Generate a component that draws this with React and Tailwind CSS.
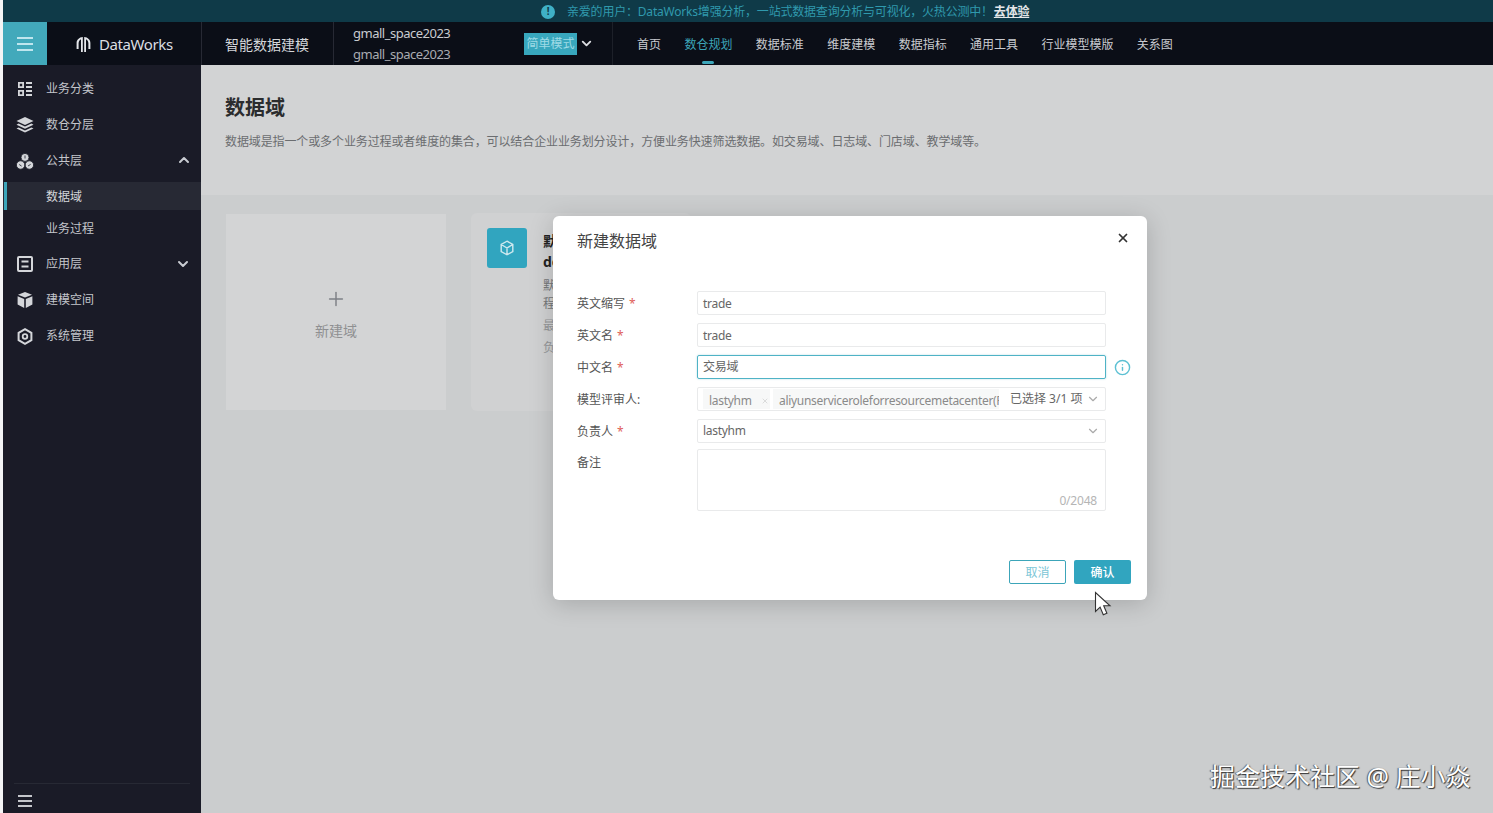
import React from 'react'
import { ChevronDown, ChevronUp, Info, Plus, X } from 'lucide-react'

const font = { fontFamily: '"Noto Sans", "Noto Sans CJK SC", sans-serif' }

const GridIcon = () => (
    <svg width="16" height="16" viewBox="0 0 16 16" fill="#d4d6da">
        <path fillRule="evenodd" d="M1 1h6v6H1zM2.8 2.8v2.4h2.4V2.8zM1 9h6v6H1zM2.8 10.8v2.4h2.4v-2.4z" />
        <path d="M9 1h6v1.9H9zM9 5.1h6V7H9zM9 9h6v1.9H9zM9 13.1h6V15H9z" />
    </svg>
)

const LayersIcon = () => (
    <svg width="18" height="16" viewBox="0 0 18 16" fill="#d4d6da">
        <path d="M9 0l8.5 4L9 8 .5 4z" />
        <path d="M2.6 6.6L9 9.6l6.4-3 2.1 1.2L9 11.8.5 7.8z" />
        <path d="M2.6 10.4L9 13.4l6.4-3 2.1 1.2L9 15.6.5 11.6z" />
    </svg>
)

const CubesIcon = () => (
    <svg width="18" height="17" viewBox="0 0 18 17" fill="#d4d6da" stroke="#181a26" strokeWidth="0.8">
        <circle cx="9" cy="4.4" r="4" />
        <circle cx="4.6" cy="12" r="4.2" />
        <circle cx="13.4" cy="12" r="4.2" />
        <path d="M9 2.5v3M3.2 11.5l2.4 1.6M12 13l2.6-1.6" fill="none" />
    </svg>
)

const ListBoxIcon = () => (
    <svg width="16" height="16" viewBox="0 0 16 16" fill="none" stroke="#d4d6da" strokeWidth="2">
        <rect x="1" y="1" width="14" height="14" rx="1" />
        <path d="M4.5 5.5h7M4.5 10.5h7" />
    </svg>
)

const BoxIcon = () => (
    <svg width="16" height="16" viewBox="0 0 16 16" fill="#d4d6da">
        <path d="M8 0l7 2.8L8 5.6 1 2.8z" />
        <path d="M.6 4.2l6.6 2.7V16L.6 12.6z" />
        <path d="M15.4 4.2L8.8 6.9V16l6.6-3.4z" />
    </svg>
)

const HexIcon = () => (
    <svg width="16" height="17" viewBox="0 0 16 17" fill="none" stroke="#d4d6da">
        <path d="M8 1.2l6.4 3.6v7.4L8 15.8l-6.4-3.6V4.8z" strokeWidth="2" />
        <circle cx="8" cy="8.5" r="2.3" strokeWidth="1.8" />
    </svg>
)

const Bars = ({ color, wide, gap, thick }) => (
    <svg width={wide} height={gap * 2 + thick} viewBox={`0 0 ${wide} ${gap * 2 + thick}`} fill={color}>
        <rect y="0" width={wide} height={thick} />
        <rect y={gap} width={wide} height={thick} />
        <rect y={gap * 2} width={wide} height={thick} />
    </svg>
)

const menu = [
    { label: '业务分类', icon: <GridIcon />, rowClass: 'h-9' },
    { label: '数仓分层', icon: <LayersIcon />, rowClass: 'h-9' },
    { label: '公共层', icon: <CubesIcon />, rowClass: 'h-9', arrow: 'up' },
    { label: '数据域', rowClass: 'h-7 mt-1', active: true },
    { label: '业务过程', rowClass: 'h-7 mt-1' },
    { label: '应用层', icon: <ListBoxIcon />, rowClass: 'h-9 mt-[3px]', arrow: 'down' },
    { label: '建模空间', icon: <BoxIcon />, rowClass: 'h-9' },
    { label: '系统管理', icon: <HexIcon />, rowClass: 'h-9' },
]

const navItems = ['首页', '数仓规划', '数据标准', '维度建模', '数据指标', '通用工具', '行业模型模版', '关系图']

const Sidebar = () => (
    <aside className="w-[198px] shrink-0 bg-[#1a1b27] flex flex-col justify-between">
        <div className="pt-[5px]">
            {menu.map((item) => (
                <div
                    key={item.label}
                    className={`relative flex items-center pt-[2px] text-xs ${item.rowClass} ${item.active ? 'bg-[#272934] text-[#d4d6da]' : 'text-[#c4c6cb]'}`}
                >
                    {item.active && <span className="absolute left-px top-0 bottom-0 w-[3px] bg-[#3ca5b9]" />}
                    <span className="w-[43px] flex justify-center pl-[1px] shrink-0">{item.icon}</span>
                    <span>{item.label}</span>
                    {item.arrow === 'up' && <ChevronUp size={16} strokeWidth={3} className="ml-auto mr-[9px] -mt-[2px] text-[#c9ccd2]" />}
                    {item.arrow === 'down' && <ChevronDown size={16} strokeWidth={3} className="ml-auto mr-[10px] text-[#c9ccd2]" />}
                </div>
            ))}
        </div>
        <div className="h-[30px] mx-[11px] border-t border-[#272934] flex items-center pl-1 pt-1">
            <Bars color="#c4c6cb" wide={14} gap={5} thick={2} />
        </div>
    </aside>
)

const Header = () => (
    <header className="h-[43px] bg-[#0b0e17] flex items-stretch shrink-0">
        <div className="w-[44px] bg-[#42a9bb] flex items-center justify-center">
            <Bars color="#bfe6ee" wide={16} gap={6} thick={2} />
        </div>
        <div className="w-[154px] flex items-center pl-[29px] pt-[2px] gap-2 text-[15px] tracking-[-0.4px] text-[#dcdee2] shrink-0">
            <svg width="15" height="17" viewBox="0 0 15 17" fill="#e4e6ea">
                <path d="M6.8 1v15H5V3.3C3.6 4 2.6 5.4 2.6 7.2V13H.6V7C.6 3.8 3.2 1.3 6.8 1z" />
                <path d="M8.2 1c3.6.3 6.2 2.8 6.2 6v6h-2V7.2c0-1.8-1-3.2-2.4-3.9V16H8.2z" />
            </svg>
            <span>DataWorks</span>
        </div>
        <div className="w-[132px] border-l border-[#272934] flex items-center pl-[23px] pt-[2px] text-sm text-[#d4d6da] shrink-0">智能数据建模</div>
        <div className="w-[191px] border-l border-[#272934] pl-[19px] flex flex-col justify-center gap-[3px] text-[13px] leading-[18px] tracking-[-0.5px] text-[#c9cbd0] shrink-0">
            <span>gmall_space2023</span>
            <span className="text-[#a9abb1]">gmall_space2023</span>
        </div>
        <div className="flex items-center w-[88px] shrink-0">
            <span className="w-[53px] h-[22px] bg-[#38a7bd] text-[#9fdbe6] text-xs flex items-center justify-center">简单模式</span>
            <ChevronDown size={15} strokeWidth={3} className="ml-[2px] text-[#dcdee2]" />
        </div>
        <nav className="border-l border-[#1d2029] pl-6 pt-[2px] flex items-center gap-[23.4px] text-xs text-[#c9cbd0]">
            {navItems.map((name) => (
                <span key={name} className={`relative ${name === '数仓规划' ? 'text-[#3ca5b9]' : ''}`}>
                    {name}
                    {name === '数仓规划' && <span className="absolute left-[18px] top-[24px] w-3 h-[3px] bg-[#3ca5b9] rounded-sm" />}
                </span>
            ))}
        </nav>
    </header>
)

const Field = ({ label, required, children, after }) => (
    <div className="flex items-center h-6 mb-2">
        <label className="w-[120px] pt-[2px] text-xs text-[#555] shrink-0">
            {label}
            {required && <span className="text-[#e0605a] ml-1">*</span>}
        </label>
        {children}
        {after}
    </div>
)

const inputClass = 'w-[409px] h-6 border border-[#e9eaeb] rounded-[2px] px-[5px] flex items-center text-xs tracking-[-0.3px] text-[#666]'

const Dialog = () => (
    <div className="absolute left-[553px] top-[216px] w-[594px] h-[384px] bg-white rounded-md shadow-[0_4px_24px_rgba(0,0,0,0.18)] flex flex-col pl-6 pr-4 pb-4">
        <div className="flex justify-between items-start pt-[14px] h-[75px]">
            <h3 className="text-base leading-[22px] text-[#444]">新建数据域</h3>
            <X size={14} strokeWidth={3} className="text-[#333] mr-[1px] mt-[1px]" />
        </div>
        <Field label="英文缩写" required><div className={`${inputClass} pt-[2px]`}>trade</div></Field>
        <Field label="英文名" required><div className={`${inputClass} pt-[2px]`}>trade</div></Field>
        <Field
            label="中文名"
            required
            after={<Info size={17} strokeWidth={2} className="ml-2 text-[#5cc0d3]" />}
        >
            <div className={`${inputClass} !border-[#4fb3c6] shadow-[0_0_2px_rgba(60,165,185,0.4)]`}>交易域</div>
        </Field>
        <Field label="模型评审人:">
            <div className={`${inputClass} pr-[5px]`}>
                <span className="w-[67px] h-5 bg-[#f7f8f8] text-[#8a8a8a] flex items-center pl-[6px] pt-[3px] shrink-0">
                    lastyhm<X size={8} className="ml-[9px] text-[#ccc]" />
                </span>
                <span className="w-[226px] ml-[3px] h-5 bg-[#f7f8f8] text-[#8a8a8a] pl-[6px] pt-[3px] leading-[18px] overflow-hidden whitespace-nowrap shrink-0">
                    aliyunserviceroleforresourcemetacenter(R
                </span>
                <span className="ml-[11px] text-[#666] tracking-normal whitespace-nowrap">已选择 3/1 项</span>
                <ChevronDown size={14} className="ml-auto text-[#aaa]" />
            </div>
        </Field>
        <Field label="负责人" required>
            <div className={`${inputClass} pr-[5px] justify-between`}>
                lastyhm
                <ChevronDown size={14} className="text-[#aaa]" />
            </div>
        </Field>
        <div className="flex -mt-[2px]">
            <label className="w-[120px] text-xs text-[#555] pt-[6px] shrink-0">备注</label>
            <div className="relative w-[409px] h-[62px] border border-[#e9eaeb] rounded-[2px]">
                <span className="absolute right-[8px] bottom-[1px] text-xs tracking-[-0.2px] text-[#b5b5b5]">0/2048</span>
            </div>
        </div>
        <div className="mt-auto flex justify-end gap-2">
            <button className="w-[57px] h-6 border border-[#3ca5b9] rounded-[2px] pt-[2px] text-xs text-[#7cc6d6]">取消</button>
            <button className="w-[57px] h-6 bg-[#31a5bf] rounded-[2px] pt-[2px] text-xs font-medium text-white">确认</button>
        </div>
    </div>
)

const Cards = () => (
    <div className="flex gap-[25px] pl-[25px] pt-[19px]">
        <div className="w-[220px] h-[196px] bg-[#d3d4d5] flex flex-col items-center justify-center pt-[4px] text-[#8f9092]">
            <Plus size={22} strokeWidth={1.6} className="text-[#7e8086]" />
            <span className="text-sm mt-[11px]">新建域</span>
        </div>
        <div className="w-[220px] h-[198px] -mt-px bg-[#d0d1d2] rounded-md flex gap-[16px] pl-4 pt-[15px]">
            <div className="w-10 h-10 bg-[#31a5bf] rounded-[3px] flex items-center justify-center shrink-0">
                <svg width="16" height="16" viewBox="0 0 16 16" fill="none" stroke="#cfe9ef" strokeWidth="1.4">
                    <path d="M8 1.2l5.8 3.3v7L8 14.8l-5.8-3.3v-7zM2.2 4.5L8 8l5.8-3.5M8 8v6.8" />
                </svg>
            </div>
            <div className="w-[120px] overflow-hidden whitespace-nowrap pt-[3px]">
                <div className="text-sm leading-[20px] font-bold text-[#222]">默认数据域</div>
                <div className="text-sm leading-[22px] font-bold text-[#222]">default</div>
                <div className="text-xs leading-[18px] text-[#76787a] mt-[4px]">默认</div>
                <div className="text-xs leading-[18px] text-[#76787a]">程</div>
                <div className="text-xs leading-[18px] text-[#96989a] mt-[4px]">最近</div>
                <div className="text-xs leading-[18px] text-[#96989a] mt-[4px]">负责</div>
            </div>
        </div>
    </div>
)

const App = () => {
    return (
        <div className="relative w-[1493px] h-[813px] overflow-hidden bg-[#cbcdce] flex flex-col pl-[3px]" style={font}>
            <div className="absolute inset-y-0 left-0 w-[3px] bg-[#f4f4f5]" />
            <div className="h-[22px] bg-[#0f3a48] flex items-center pl-[538px] pt-[2px] shrink-0 text-xs tracking-[-0.2px]">
                <span className="w-[14px] h-[14px] rounded-full bg-[#3fb0c6] text-[#0f3a48] text-[10px] font-bold flex items-center justify-center mr-[12px]">!</span>
                <span className="text-[#2f99ad]">亲爱的用户：DataWorks增强分析，一站式数据查询分析与可视化，火热公测中！</span>
                <span className="font-bold text-[#e4e6e8] underline ml-[1px]">去体验</span>
            </div>
            <Header />
            <div className="flex flex-1 min-h-0">
                <Sidebar />
                <main className="flex-1 flex flex-col">
                    <section className="h-[130px] bg-[#d2d3d4] pl-6 pt-[29px]">
                        <h1 className="text-xl leading-7 font-bold text-[#2b2c2e]">数据域</h1>
                        <p className="text-xs leading-[18px] mt-[11px] tracking-[-0.11px] text-[#6b6d70]">
                            数据域是指一个或多个业务过程或者维度的集合，可以结合企业业务划分设计，方便业务快速筛选数据。如交易域、日志域、门店域、教学域等。
                        </p>
                    </section>
                    <Cards />
                </main>
            </div>
            <Dialog />
            <svg className="absolute left-[1094px] top-[591px]" width="18" height="26" viewBox="0 0 18 26">
                <path d="M1.5 1.5v19l4.6-4.4 3.2 7.6 3.6-1.5-3.2-7.4h6.3z" fill="#fff" stroke="#333" strokeWidth="1.1" />
            </svg>
            <div className="absolute left-[1210px] top-[758px] text-[25px] leading-9 whitespace-nowrap text-white [text-shadow:1px_1px_1px_#333,-1px_0_1px_#555]">
                掘金技术社区 @ 庄小焱
            </div>
        </div>
    )
}

export default App
